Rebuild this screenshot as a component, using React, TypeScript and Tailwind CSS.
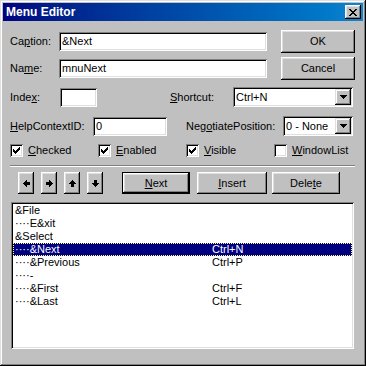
import React from "react";

function Pix({ rows, className = "" }: { rows: string[]; className?: string }) {
  const w = rows[0].length;
  const h = rows.length;
  const rects: React.ReactNode[] = [];
  rows.forEach((r, y) => {
    for (let x = 0; x < r.length; x++) {
      if (r[x] === "#") rects.push(<rect key={`${x}-${y}`} x={x} y={y} width={1} height={1} />);
    }
  });
  return (
    <svg width={w} height={h} viewBox={`0 0 ${w} ${h}`} shapeRendering="crispEdges" fill="#000" className={className}>
      {rects}
    </svg>
  );
}

const CHECK = ["......#", ".....##", "#...###", "##.###.", "#####..", ".###...", "..#...."];
const CLOSE = ["##....##", ".##..##.", "..####..", "...##...", "..####..", ".##..##.", "##....##"];
const LEFT = ["...#...", "..##...", ".######", "#######", ".######", "..##...", "...#..."];
const RIGHT = ["...#...", "...##..", "######.", "#######", "######.", "...##..", "...#..."];
const UP = ["...#...", "..###..", ".#####.", "#######", "..###..", "..###..", "..###.."];
const DOWN = ["..###..", "..###..", "..###..", "#######", ".#####.", "..###..", "...#..."];
const TRI = ["#######", ".#####.", "..###..", "...#..."];

function Btn({ className = "", children, def = false }: { className?: string; children: React.ReactNode; def?: boolean }) {
  return (
    <div
      className={
        (def
          ? "border border-black shadow-[inset_-1px_-1px_#000,inset_1px_1px_#fff,inset_-2px_-2px_#808080,inset_2px_2px_#dfdfdf] "
          : "shadow-[inset_-1px_-1px_#000,inset_1px_1px_#fff,inset_-2px_-2px_#808080,inset_2px_2px_#dfdfdf] ") +
        "bg-[#c0c0c0] flex items-center justify-center shrink-0 " +
        className
      }
    >
      {children}
    </div>
  );
}

function Field({ className = "", children }: { className?: string; children?: React.ReactNode }) {
  return (
    <div
      className={
        "bg-white shrink-0 flex items-center pl-[3px] shadow-[inset_1px_1px_#808080,inset_-1px_-1px_#fff,inset_2px_2px_#000,inset_-2px_-2px_#dfdfdf] " +
        className
      }
    >
      {children}
    </div>
  );
}

function Combo({ className = "", value }: { className?: string; value: string }) {
  return (
    <div
      className={
        "bg-white shrink-0 flex items-center p-[2px] shadow-[inset_1px_1px_#808080,inset_-1px_-1px_#fff,inset_2px_2px_#000,inset_-2px_-2px_#dfdfdf] " +
        className
      }
    >
      <span className="flex-1 pl-[1px]">{value}</span>
      <div className="w-[16px] h-[16px] bg-[#c0c0c0] flex items-center justify-center shadow-[inset_-1px_-1px_#000,inset_1px_1px_#dfdfdf,inset_-2px_-2px_#808080,inset_2px_2px_#fff]">
        <Pix rows={TRI} />
      </div>
    </div>
  );
}

function Check({ checked, label }: { checked: boolean; label: React.ReactNode }) {
  return (
    <div className="w-[88px] flex items-center shrink-0">
      <div className="w-[13px] h-[13px] bg-white flex items-center justify-center shadow-[inset_1px_1px_#808080,inset_-1px_-1px_#fff,inset_2px_2px_#000,inset_-2px_-2px_#dfdfdf]">
        {checked && <Pix rows={CHECK} />}
      </div>
      <span className="ml-[5px]">{label}</span>
    </div>
  );
}

const items: [string, string][] = [
  ["&File", ""],
  ["····E&xit", ""],
  ["&Select", ""],
  ["····&Next", "Ctrl+N"],
  ["····&Previous", "Ctrl+P"],
  ["····-", ""],
  ["····&First", "Ctrl+F"],
  ["····&Last", "Ctrl+L"],
];

export default function App() {
  return (
    <div className="w-[366px] h-[366px] bg-[#c0c0c0] p-[3px] shadow-[inset_-1px_-1px_#000,inset_1px_1px_#dfdfdf,inset_-2px_-2px_#808080,inset_2px_2px_#fff] font-['Liberation_Sans',Arial,sans-serif] text-[11px] leading-[13px] text-black">
      {/* title bar */}
      <div className="h-[18px] flex items-center bg-linear-to-r from-[#000080] to-[#1084d0] pl-[3px] pr-[2px]">
        <span className="text-white font-bold text-[12px]">Menu Editor</span>
        <div className="ml-auto w-[16px] h-[14px] bg-[#c0c0c0] flex items-center justify-center shadow-[inset_-1px_-1px_#000,inset_1px_1px_#fff,inset_-2px_-2px_#808080,inset_2px_2px_#dfdfdf]">
          <Pix rows={CLOSE} />
        </div>
      </div>

      <div className="pl-[7px]">
        {/* Caption row */}
        <div className="mt-[9px] h-[23px] flex items-center">
          <span className="w-[49px] shrink-0">
            Ca<u>p</u>tion:
          </span>
          <Field className="w-[208px] h-[19px]">&amp;Next</Field>
          <Btn className="ml-[14px] w-[74px] h-[23px]">OK</Btn>
        </div>
        {/* Name row */}
        <div className="mt-[4px] h-[23px] flex items-center">
          <span className="w-[49px] shrink-0">
            Na<u>m</u>e:
          </span>
          <Field className="w-[208px] h-[19px]">mnuNext</Field>
          <Btn className="ml-[14px] w-[74px] h-[23px]">Cancel</Btn>
        </div>
        {/* Index row */}
        <div className="mt-[7px] h-[20px] flex items-center">
          <span className="w-[50px] shrink-0">
            Inde<u>x</u>:
          </span>
          <Field className="w-[37px] h-[19px]" />
          <span className="ml-[73px] w-[63px] shrink-0">
            <u>S</u>hortcut:
          </span>
          <Combo className="w-[120px] h-[20px]" value="Ctrl+N" />
        </div>
        {/* Help row */}
        <div className="mt-[9px] h-[20px] flex items-center">
          <span className="w-[83px] shrink-0">
            <u>H</u>elpContextID:
          </span>
          <Field className="w-[74px] h-[19px]">0</Field>
          <span className="ml-[19px] w-[97px] shrink-0">
            Neg<u>o</u>tiatePosition:
          </span>
          <Combo className="w-[70px] h-[20px]" value="0 - None" />
        </div>
        {/* Checkboxes */}
        <div className="mt-[8px] h-[13px] flex items-center">
          <Check checked label={<><u>C</u>hecked</>} />
          <Check checked label={<><u>E</u>nabled</>} />
          <Check checked label={<><u>V</u>isible</>} />
          <Check checked={false} label={<><u>W</u>indowList</>} />
        </div>
        {/* separator */}
        <div className="mt-[8px] w-[345px] border-t border-b border-t-[#808080] border-b-white" />
        {/* buttons */}
        <div className="mt-[5px] h-[22px] flex items-center">
          <div className="ml-[8px] flex gap-[7px]">
            <Btn className="w-[16px] h-[22px]"><Pix rows={LEFT} /></Btn>
            <Btn className="w-[16px] h-[22px]"><Pix rows={RIGHT} /></Btn>
            <Btn className="w-[16px] h-[22px]"><Pix rows={UP} /></Btn>
            <Btn className="w-[16px] h-[22px]"><Pix rows={DOWN} /></Btn>
          </div>
          <Btn def className="ml-[19px] w-[68px] h-[22px]">
            <span><u>N</u>ext</span>
          </Btn>
          <Btn className="ml-[7px] w-[70px] h-[22px]">
            <span><u>I</u>nsert</span>
          </Btn>
          <Btn className="ml-[5px] w-[68px] h-[22px]">
            <span>Dele<u>t</u>e</span>
          </Btn>
        </div>
        {/* list */}
        <div className="mt-[8px] ml-[1px] w-[343px] h-[147px] bg-white p-[2px] shadow-[inset_1px_1px_#808080,inset_-1px_-1px_#fff,inset_2px_2px_#000,inset_-2px_-2px_#dfdfdf]">
          {items.map(([a, b], i) => (
            <div
              key={i}
              className={
                "h-[13px] flex items-center " +
                (i === 3 ? "bg-[#000080] text-white outline-1 outline-dotted outline-[#ffff80] -outline-offset-1" : "")
              }
            >
              <span className="w-[199px] pl-[2px] shrink-0 whitespace-pre">{a}</span>
              <span>{b}</span>
            </div>
          ))}
        </div>
      </div>
    </div>
  );
}
